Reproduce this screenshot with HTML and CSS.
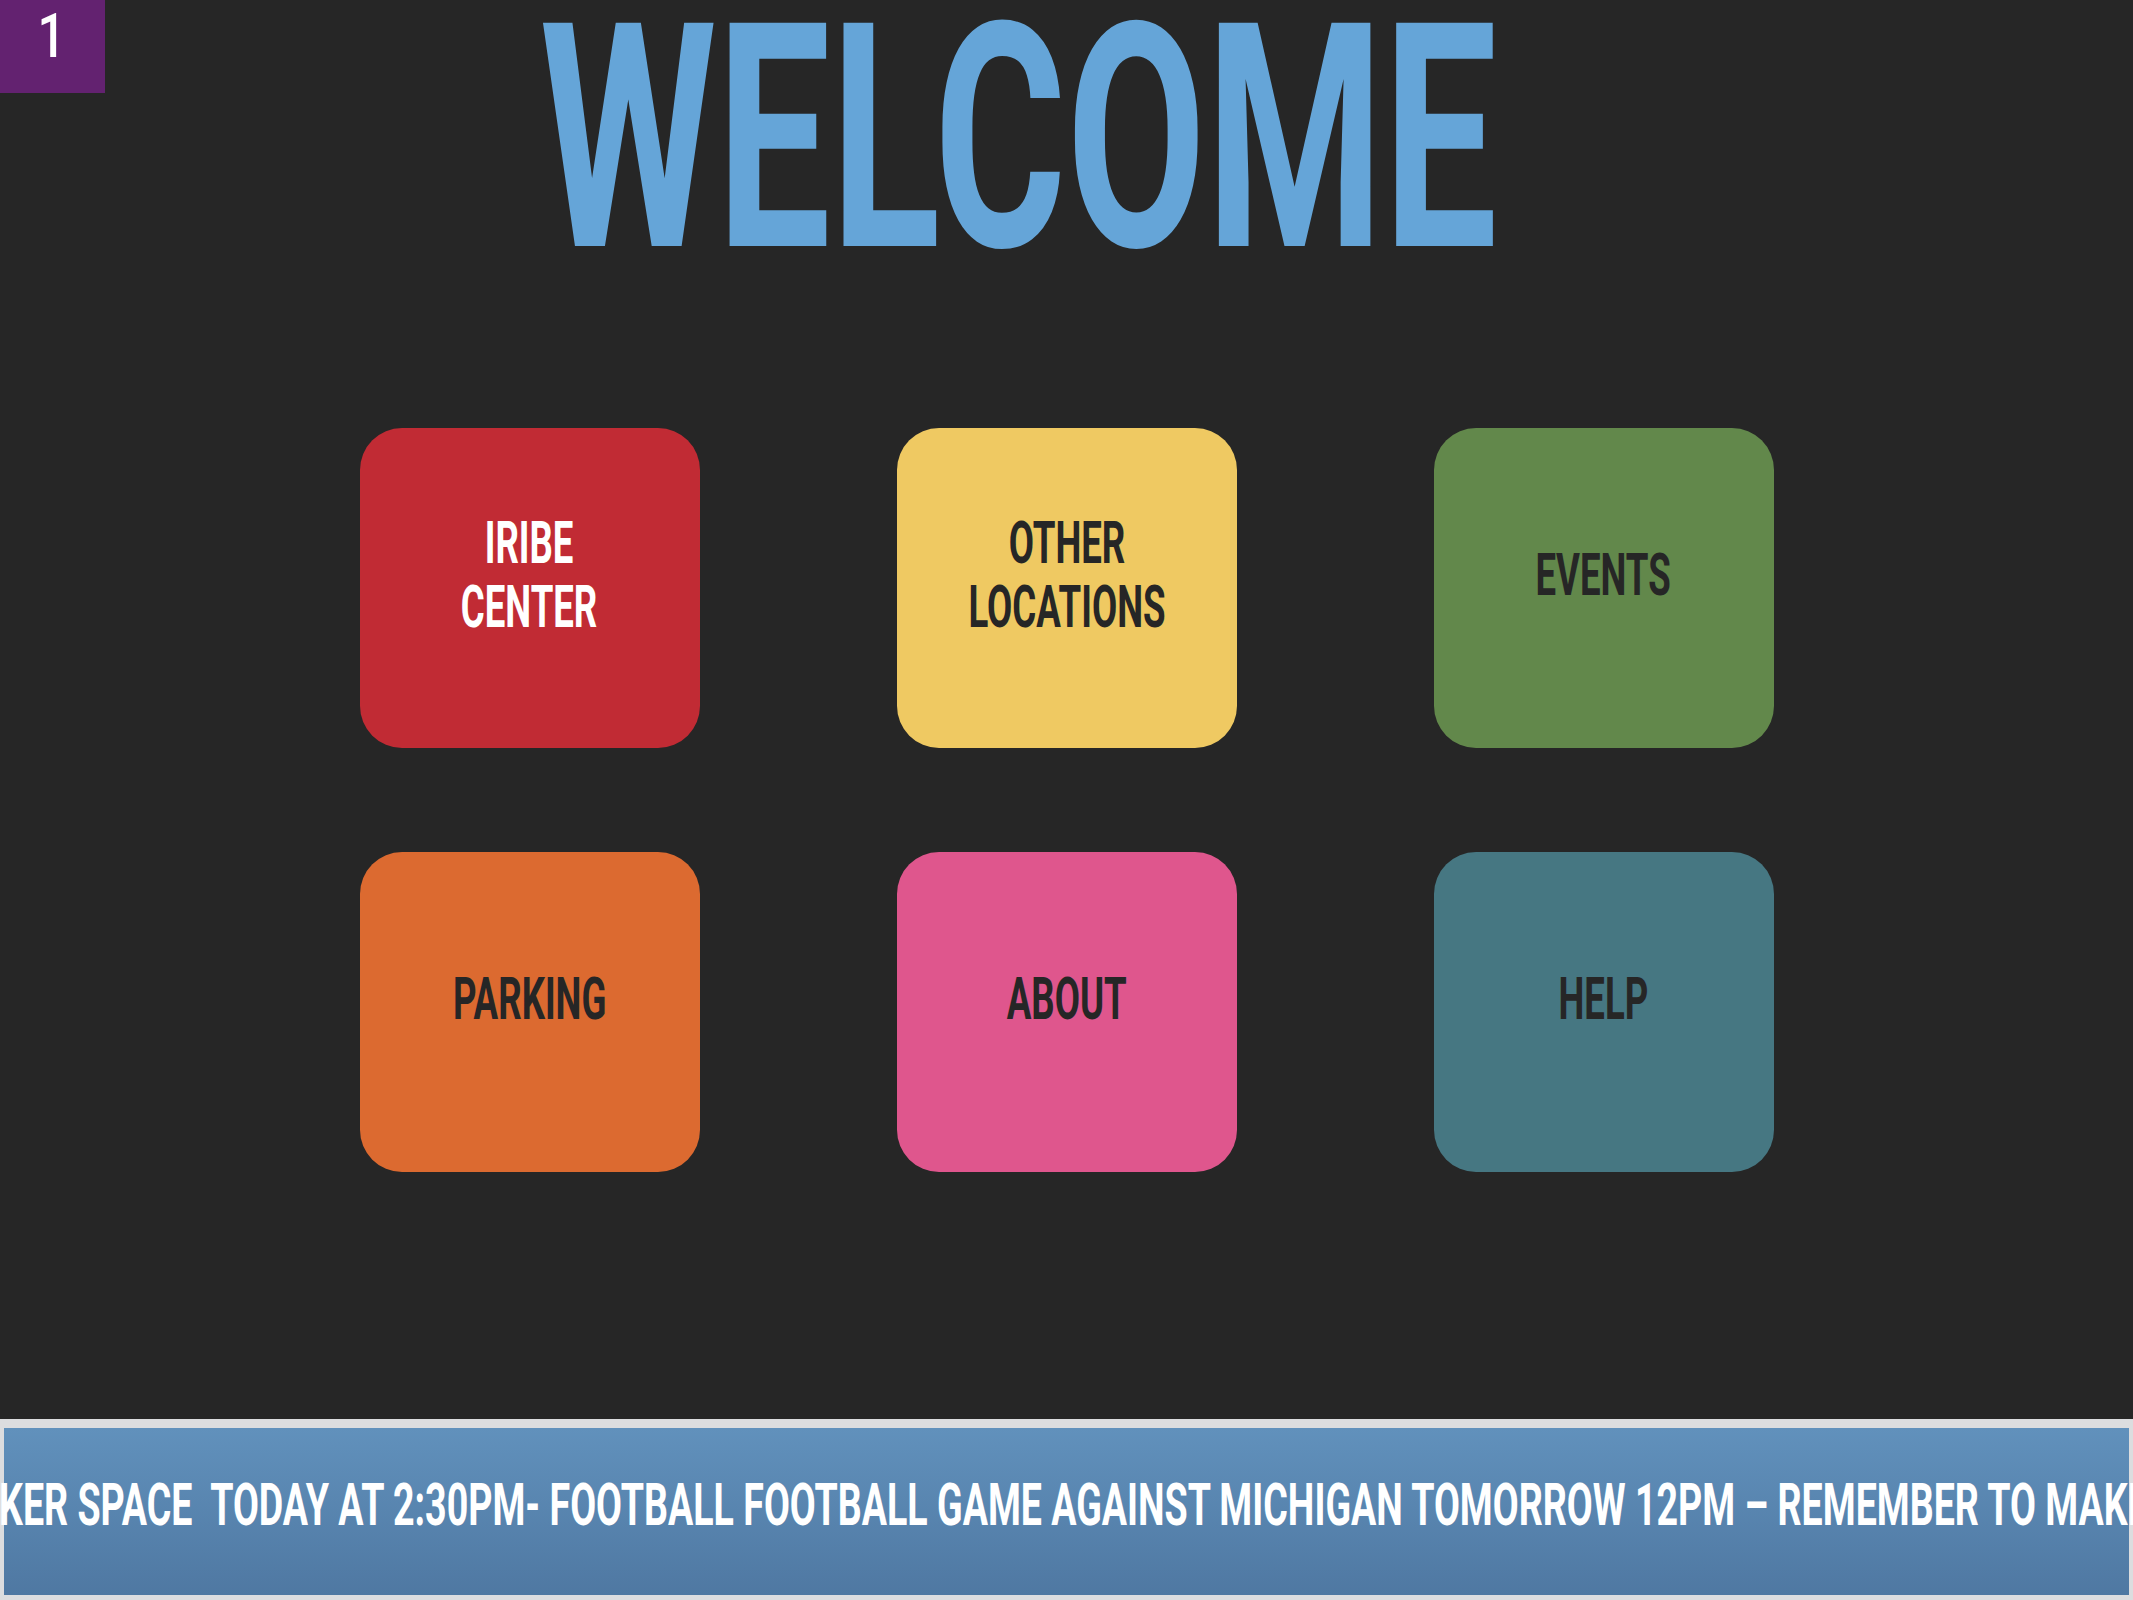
FILE: index.html
```html
<!DOCTYPE html>
<html lang="en">
<head>
<meta charset="utf-8">
<title>Welcome</title>
<link rel="stylesheet" href="styles.css">
</head>
<body>
<div class="screen">
  <div class="badge"><span class="badge-num">1</span></div>
  <header class="title"><span class="title-text">WELCOME</span></header>
  <main class="tiles">
    <a class="tile tile-red"><span class="label">IRIBE<br>CENTER</span></a>
    <a class="tile tile-yellow"><span class="label">OTHER<br>LOCATIONS</span></a>
    <a class="tile tile-green"><span class="label">EVENTS</span></a>
    <a class="tile tile-orange"><span class="label">PARKING</span></a>
    <a class="tile tile-pink"><span class="label">ABOUT</span></a>
    <a class="tile tile-teal"><span class="label">HELP</span></a>
  </main>
  <footer class="ticker">
    <div class="ticker-line"><span class="ticker-text">KER SPACE  TODAY AT 2:30PM- FOOTBALL FOOTBALL GAME AGAINST MICHIGAN TOMORROW 12PM – REMEMBER TO MAKE</span></div>
  </footer>
</div>
</body>
</html>
```
FILE: styles.css
```css
html, body {
  margin: 0;
  padding: 0;
  background: #262626;
}
body {
  width: 2133px;
  height: 1600px;
  overflow: hidden;
  font-family: Roboto, "Liberation Sans", sans-serif;
}
.screen {
  position: relative;
  width: 2133px;
  height: 1600px;
  display: flex;
  flex-direction: column;
  overflow: hidden;
}
.badge {
  position: absolute;
  left: 0;
  top: 0;
  width: 105px;
  height: 93px;
  background: #632270;
  display: flex;
  justify-content: center;
  align-items: flex-start;
}
.badge-num {
  color: #ffffff;
  font-size: 62px;
  font-weight: 500;
  line-height: 62px;
  margin-top: 5px;
  margin-right: 2px;
  display: inline-block;
  transform: scaleX(0.8);
}
.title {
  padding-top: 14px;
  padding-right: 96px;
  height: 251px;
  line-height: 251px;
  text-align: center;
  color: #65a5d8;
  font-size: 314px;
  font-weight: 700;
  white-space: nowrap;
}
.title-text {
  display: inline-block;
  transform: scaleX(0.645);
  transform-origin: center;
}
.tiles {
  margin-top: 163px;
  display: grid;
  grid-template-columns: repeat(3, 340px);
  grid-auto-rows: 320px;
  column-gap: 197px;
  row-gap: 104px;
  justify-content: center;
}
.tile {
  display: flex;
  align-items: center;
  justify-content: center;
  padding-bottom: 26px;
  box-sizing: border-box;
  border-radius: 42px;
  color: #262626;
  text-align: center;
  font-size: 59px;
  font-weight: 700;
  line-height: 64px;
  text-decoration: none;
}
.label {
  display: inline-block;
  transform: scaleX(0.62);
  transform-origin: center;
  white-space: nowrap;
}
.tile-red { background: #c12b34; color: #ffffff; }
.tile-yellow { background: #efc962; }
.tile-green { background: #62884b; }
.tile-orange { background: #dc6a30; }
.tile-pink { background: #df568d; }
.tile-teal { background: #467782; }
.ticker {
  margin-top: auto;
  height: 181px;
  box-sizing: border-box;
  border-style: solid;
  border-color: #dcdddf;
  border-width: 9px 4px 5px 4px;
  background: linear-gradient(180deg, #6191bc 0%, #4f78a2 100%);
  overflow: visible;
}
.ticker-line {
  margin-left: -5px;
  padding-top: 45px;
  height: 64px;
  line-height: 64px;
  font-size: 59px;
  font-weight: 700;
  color: #ffffff;
  white-space: pre;
}
.ticker-text {
  display: inline-block;
  transform: scaleX(0.637);
  transform-origin: left center;
}
```
